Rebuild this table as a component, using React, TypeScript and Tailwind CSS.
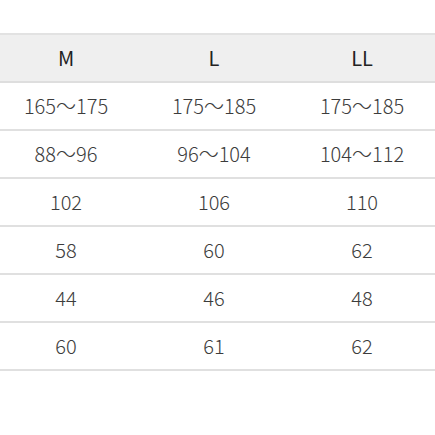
const sizes = ["M", "L", "LL"]

const rows = [
  ["165～175", "175～185", "175～185"],
  ["88～96", "96～104", "104～112"],
  ["102", "106", "110"],
  ["58", "60", "62"],
  ["44", "46", "48"],
  ["60", "61", "62"],
]

export default function App() {
  return (
    <div className="w-[435px] h-[435px] overflow-hidden bg-white pt-[33px] font-['Noto_Sans_CJK_JP','Noto_Sans',sans-serif] font-light text-[20px] text-[#3c3c3c]">
      <div className="w-[444px] -ml-[8px] border-t-2 border-[#e2e2e2]">
        {/* header */}
        <div className="grid grid-cols-3 h-[48px] bg-[#efefef] border-b-2 border-[#dedede]">
          {sizes.map((s) => (
            <div key={s} className="flex items-center justify-center font-normal text-[#222]">
              {s}
            </div>
          ))}
        </div>
        {rows.map((r, i) => (
          <div key={i} className="grid grid-cols-3 h-[48px] border-b-2 border-[#e0e0e0]">
            {r.map((v, j) => (
              <div key={j} className="flex items-center justify-center">
                {v}
              </div>
            ))}
          </div>
        ))}
      </div>
    </div>
  )
}
